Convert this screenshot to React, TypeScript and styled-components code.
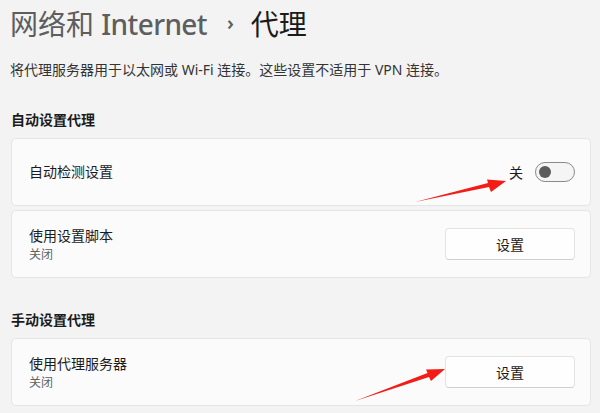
import React from 'react';
import styled, { createGlobalStyle } from 'styled-components';

const GlobalStyle = createGlobalStyle`
  html, body {
    margin: 0;
    padding: 0;
    background: #f3f3f3;
  }
  body {
    font-family: "Noto Sans", "Noto Sans CJK SC", sans-serif;
    color: #1b1b1b;
  }
`;

const Page = styled.div`
  position: relative;
  width: 600px;
  height: 413px;
  overflow: hidden;
  box-sizing: border-box;
  padding: 0 9px 0 11px;
  display: flex;
  flex-direction: column;
`;

const Breadcrumb = styled.h1`
  margin: 3px 0 0 -1px;
  height: 40px;
  display: flex;
  align-items: center;
  font-size: 28px;
  font-weight: 400;
  white-space: pre;
`;

const Crumb = styled.span<{ $current?: boolean }>`
  color: ${(p) => (p.$current ? '#1b1b1b' : '#5e5e5e')};
`;

const Latin = styled.span`
  font-weight: 500;
  letter-spacing: -0.6px;
`;

const Chevron = styled.span`
  color: #5e5e5e;
  font-size: 20px;
  font-weight: 600;
  margin: 0 17px 2px 20px;
`;

const Description = styled.p`
  margin: 18px 0 0 -1px;
  font-size: 14px;
  line-height: 18px;
  color: #333;
`;

const SectionTitle = styled.h2`
  margin: 0;
  font-size: 14px;
  font-weight: 600;
  line-height: 20px;
  color: #1b1b1b;
`;

const Section = styled.section<{ $top: number }>`
  margin-top: ${(p) => p.$top}px;
  display: flex;
  flex-direction: column;
  gap: 4px;

  ${SectionTitle} {
    margin-bottom: 4px;
  }
`;

const Card = styled.div`
  height: 68px;
  flex-shrink: 0;
  box-sizing: border-box;
  background: #fbfbfb;
  border: 1px solid #e5e5e5;
  border-radius: 5px;
  padding: 0 15px 0 17px;
  display: flex;
  align-items: center;
  justify-content: space-between;
`;

const Labels = styled.div`
  display: flex;
  flex-direction: column;
`;

const Label = styled.span`
  font-size: 14px;
  line-height: 20px;
  color: #1b1b1b;
`;

const SubLabel = styled.span`
  font-size: 12px;
  line-height: 16px;
  margin-top: 1px;
  color: #5f5f5f;
`;

const Button = styled.button`
  width: 130px;
  height: 32px;
  background: #fefefe;
  border: 1px solid #e3e3e3;
  border-bottom-color: #cfcfcf;
  border-radius: 4px;
  font-family: inherit;
  font-size: 14px;
  color: #1b1b1b;
`;

const ToggleWrap = styled.div`
  display: flex;
  align-items: center;
  gap: 12px;
  font-size: 14px;
  color: #1b1b1b;
`;

const Switch = styled.div`
  width: 40px;
  height: 20px;
  box-sizing: border-box;
  border: 1px solid #8a8a8a;
  border-radius: 10px;
  background: #f5f5f5;
  display: flex;
  align-items: center;
  padding-left: 3px;
`;

const Knob = styled.div`
  width: 12px;
  height: 12px;
  border-radius: 50%;
  background: #5c5c5c;
`;

const Annotations = styled.svg`
  position: absolute;
  left: 0;
  top: 0;
  pointer-events: none;
`;

const SettingRow: React.FC<{ title: string; sub?: string; children: React.ReactNode }> = ({
  title,
  sub,
  children,
}) => (
  <Card>
    <Labels>
      <Label>{title}</Label>
      {sub && <SubLabel>{sub}</SubLabel>}
    </Labels>
    {children}
  </Card>
);

export default function App() {
  return (
    <>
      <GlobalStyle />
      <Page>
        <Breadcrumb>
          <Crumb>
            网络和 <Latin>Internet</Latin>
          </Crumb>
          <Chevron>›</Chevron>
          <Crumb $current>代理</Crumb>
        </Breadcrumb>
        <Description>将代理服务器用于以太网或 Wi-Fi 连接。这些设置不适用于 VPN 连接。</Description>

        <Section $top={31}>
          <SectionTitle>自动设置代理</SectionTitle>
          <SettingRow title="自动检测设置">
            <ToggleWrap>
              关
              <Switch>
                <Knob />
              </Switch>
            </ToggleWrap>
          </SettingRow>
          <SettingRow title="使用设置脚本" sub="关闭">
            <Button>设置</Button>
          </SettingRow>
        </Section>

        <Section $top={32}>
          <SectionTitle>手动设置代理</SectionTitle>
          <SettingRow title="使用代理服务器" sub="关闭">
            <Button>设置</Button>
          </SettingRow>
        </Section>

        <Annotations width="600" height="413" viewBox="0 0 600 413">
          <polygon
            fill="#f41c16"
            points="415,202 489,187 491,192 506,181 487,179.5 488,183"
          />
          <polygon
            fill="#f41c16"
            points="355,401 429,377 431,381 445,369 426,369.5 427.5,373"
          />
        </Annotations>
      </Page>
    </>
  );
}
